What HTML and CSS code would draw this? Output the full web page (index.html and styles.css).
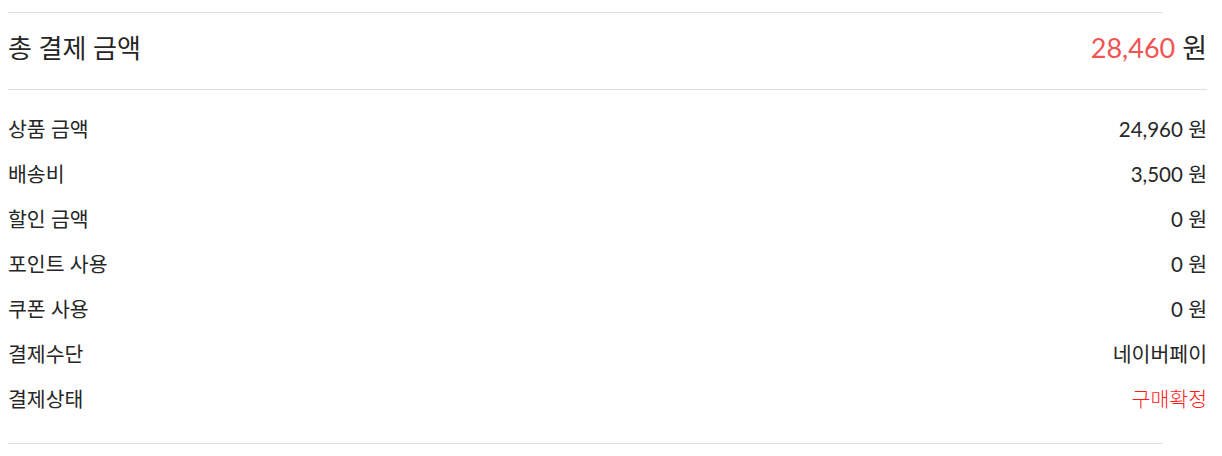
FILE: index.html
```html
<!DOCTYPE html>
<html lang="ko">
<head>
  <meta charset="UTF-8" />
  <title>결제 정보</title>
  <link rel="stylesheet" href="styles.css">
</head>
<body>

  <div class="line short"></div>

  <div class="total">
    <span class="total-label">총 결제 금액</span>
    <span class="total-price"><span class="red">28,460</span> 원</span>
  </div>

  <div class="details">
    <div class="row"><span>상품 금액</span><span>24,960 원</span></div>
    <div class="row"><span>배송비</span><span>3,500 원</span></div>
    <div class="row"><span>할인 금액</span><span>0 원</span></div>
    <div class="row"><span>포인트 사용</span><span>0 원</span></div>
    <div class="row"><span>쿠폰 사용</span><span>0 원</span></div>
    <div class="row"><span>결제수단</span><span>네이버페이</span></div>
    <div class="row"><span>결제상태</span><span class="status">구매확정</span></div>
  </div>

  <div class="line short"></div>

</body>
</html>
```

FILE: styles.css
```css
body {
  font-family: "Lato", "Noto Sans CJK KR", sans-serif;
  color: #262626;
  background: #fff;
  margin: 8px;
  width: 1199px;
}

.line {
  height: 1px;
  background: #dddddd;
}

.line.short {
  width: 1154px;
  margin-top: 4px;
}

.total {
  display: flex;
  justify-content: space-between;
  align-items: center;
  height: 66px;
  padding-bottom: 10px;
  border-bottom: 1px solid #dddddd;
}

.total-label {
  font-size: 26px;
}

.total-price {
  font-size: 27px;
}

.red {
  color: #f05454;
}

.details {
  padding: 15px 0 19px;
}

.row {
  display: flex;
  justify-content: space-between;
  align-items: center;
  height: 45px;
  font-size: 20.5px;
}

.status {
  color: #ff1a1a;
  font-weight: 300;
}
```
